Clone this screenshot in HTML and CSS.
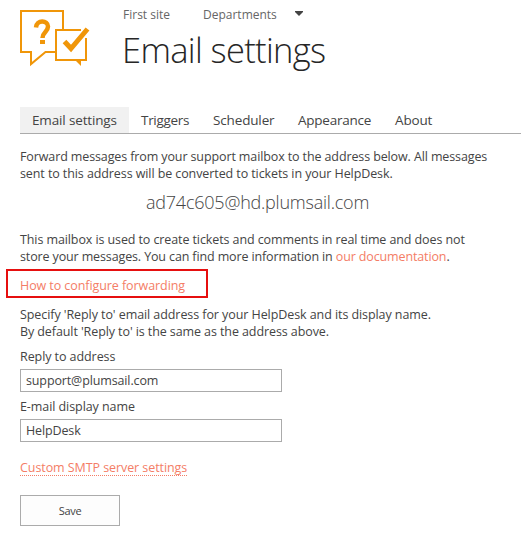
FILE: index.html
```
<!DOCTYPE html>
<html lang="en">
<head>
<meta charset="utf-8">
<title>Email settings</title>
<link rel="stylesheet" href="styles.css">
</head>
<body>
<header class="header">
  <svg class="logo" width="70" height="58" viewBox="0 0 70 58" fill="none" stroke="#f09609" stroke-width="2">
    <path d="M43 19V1H1V42H11V54L25.500 42H35"/>
    <path d="M16 17.500C16.500 9.500 28 10 28 16.500C28 22 22.500 22 22.500 28" stroke-width="4.500"/>
    <path d="M20 30h5v4h-5z" fill="#f09609" stroke="none"/>
    <path d="M61 20H36V50H66V28"/>
    <path d="M55 50h6v6z" fill="#f09609" stroke="none"/>
    <path d="M44.500 31.500L51 38.500L67.500 19" stroke-width="5"/>
  </svg>
  <div class="heading">
    <nav class="sites"><a class="site-first">First site</a><a class="site-dept">Departments</a><svg class="caret" width="8" height="5" viewBox="0 0 8 5"><path d="M0 0H8V1L4 5L0 1Z" fill="#444"/></svg></nav>
    <h1>Email settings</h1>
  </div>
</header>
<nav class="tabs">
  <a class="tab active t1">Email settings</a><a class="tab t2">Triggers</a><a class="tab t3">Scheduler</a><a class="tab t4">Appearance</a><a class="tab t5">About</a>
</nav>
<main>
  <p class="intro"><span class="l1">Forward messages from your support mailbox to the address below. All messages</span><br><span class="l2">sent to this address will be converted to tickets in your HelpDesk.</span></p>
  <div class="mailbox"><span>ad74c605@hd.plumsail.com</span></div>
  <p class="usage"><span class="l3">This mailbox is used to create tickets and comments in real time and does not</span><br><span class="l4">store your messages. You can find more information in <a class="link">our documentation</a>.</span></p>
  <div class="callout"><a class="link">How to configure forwarding</a></div>
  <p class="reply"><span>Specify 'Reply to' email address for your HelpDesk and its display name.</span><br><span class="l2">By default 'Reply to' is the same as the address above.</span></p>
  <label for="reply">Reply to address</label>
  <input id="reply" class="field" value="support@plumsail.com">
  <label for="name">E-mail display name</label>
  <input id="name" class="field" value="HelpDesk">
  <a class="link smtp">Custom SMTP server settings</a>
  <button class="save">Save</button>
</main>
</body>
</html>
```

FILE: styles.css
```
* { box-sizing: border-box; }
body { margin: 0; background: #fff; color: #444; font: 12.5px/17px "Open Sans", "Noto Sans", sans-serif; letter-spacing: -0.075px; overflow: hidden; }
.header { display: flex; height: 107px; padding: 10px 0 0 20px; }
.logo { flex: none; }
.heading { margin-left: 33px; }
.sites { display: flex; height: 17px; margin-top: -4px; font-size: 12px; letter-spacing: 0; color: #666; }
.site-first { width: 80px; }
.site-dept { width: 92px; }
.caret { margin-top: 5px; }
h1 { margin: 4px 0 0 -1px; font-size: 34.5px; line-height: 46px; font-weight: 300; letter-spacing: -0.65px; color: #262626; white-space: nowrap; }
.tabs { display: flex; height: 27px; margin-left: 20px; border-bottom: 1px solid #ababab; font-size: 13.5px; line-height: 26px; letter-spacing: -0.15px; white-space: nowrap; }
.tab { padding-left: 12px; }
.active { background: #f1f1f1; }
.t1 { width: 109px; }
.t2 { width: 72px; letter-spacing: -0.3px; }
.t3 { width: 85px; }
.t4 { width: 97px; letter-spacing: -0.25px; }
main { padding-left: 20px; white-space: nowrap; }
p { margin: 0; }
.intro { padding-top: 14px; }
.l1 { letter-spacing: -0.115px; }
.l2 { letter-spacing: -0.09px; }
.l3 { letter-spacing: -0.1px; }
.l4 { letter-spacing: -0.13px; }
.mailbox { height: 49px; padding: 8px 0 0 126px; font-size: 18px; line-height: 24px; font-weight: 300; letter-spacing: -0.22px; }
.link { color: #f47d66; }
.callout { width: 202px; height: 29px; margin: 4px 0 0 -14px; padding: 6px 0 0 12px; border: 2px solid #e60f0f; }
.reply { margin-top: 8px; }
label { display: block; margin-top: 8px; }
.field { display: block; width: 262px; height: 23px; margin: 4px 0 0; padding: 0 5px; border: 1px solid #ababab; color: #444; font: inherit; letter-spacing: -0.13px; }
.field + label { margin-top: 6px; }
.smtp { display: block; width: 167px; height: 17px; margin-top: 17px; border-bottom: 1px dotted #f47d66; }
.save { display: block; width: 100px; height: 31px; margin-top: 19px; padding: 0; border: 1px solid #ababab; background: #fdfdfd; color: #444; font: 11px "Open Sans", sans-serif; letter-spacing: -0.3px; }
```
